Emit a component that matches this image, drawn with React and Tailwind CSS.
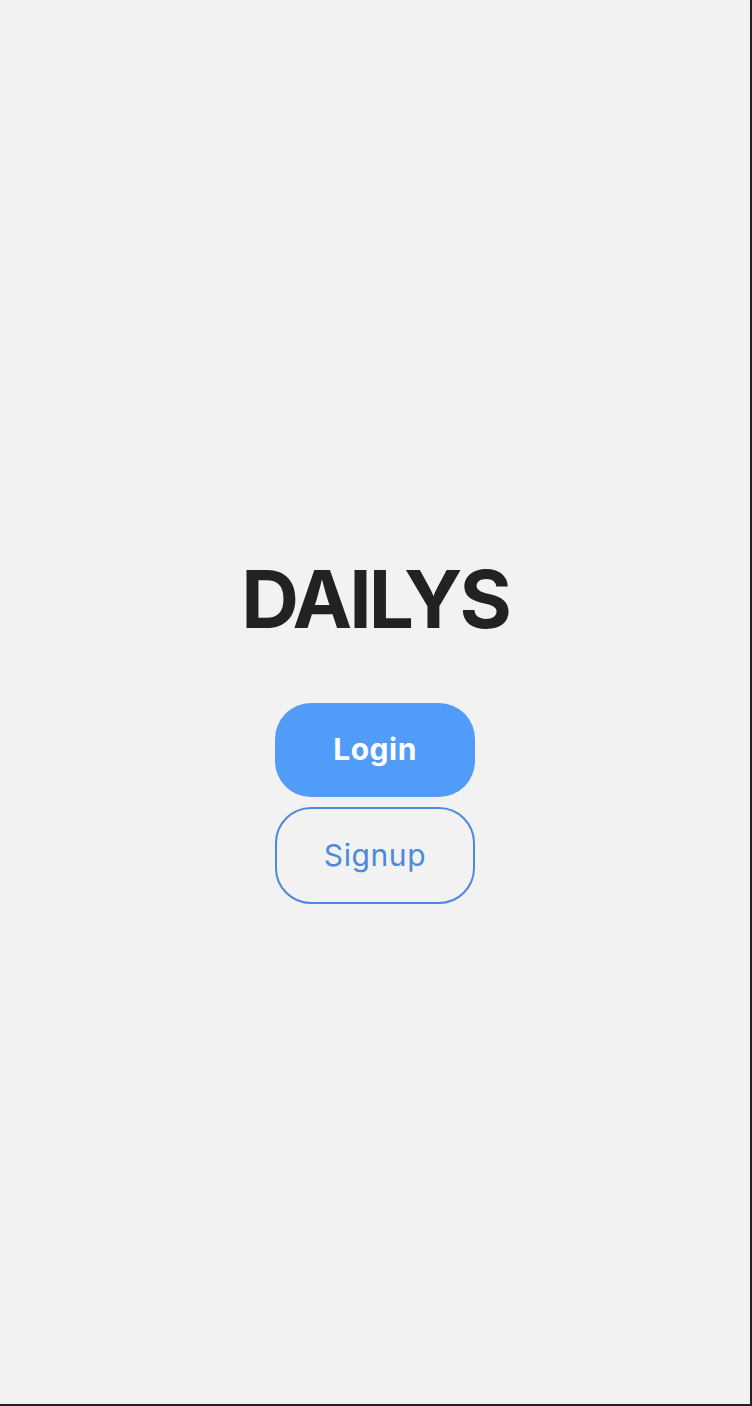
import React from "react";

const App = () => {
  return (
    <div
      className="h-[1406px] w-[752px] bg-[#f2f2f2] border-r-2 border-b-2 border-[#222222] flex flex-col items-center justify-center pt-[44px]"
      style={{ fontFamily: "Inter, 'Liberation Sans', sans-serif" }}
    >
      <h1 className="text-[80px] leading-[96px] font-bold text-[#222222] tracking-[-3px] mt-[6px]">
        DAILYS
      </h1>
      <div className="mt-[56px] flex flex-col gap-[10px]">
        <button className="w-[200px] h-[94px] rounded-[36px] bg-[#519cf9] text-white text-[30px] font-bold tracking-[0.5px]">
          Login
        </button>
        <button className="w-[200px] h-[97px] rounded-[36px] border-2 border-[#4a8ad8] text-[#4a8ad8] text-[30px] tracking-[0.6px]">
          Signup
        </button>
      </div>
    </div>
  );
};

export default App;
